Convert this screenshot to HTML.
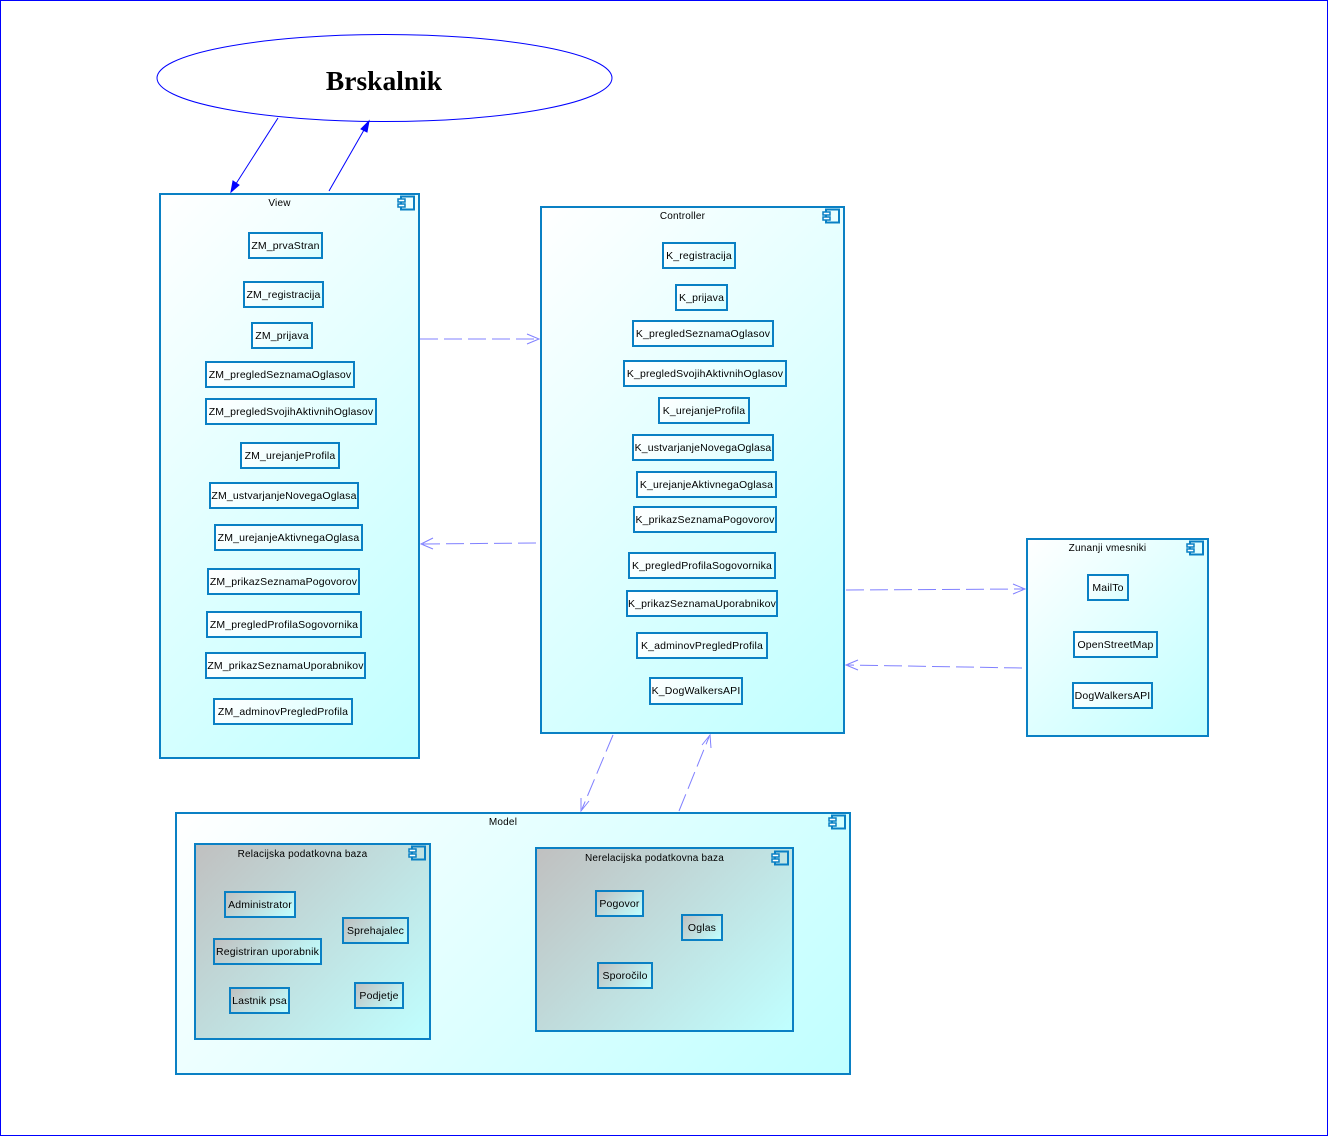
<!DOCTYPE html>
<html><head><meta charset="utf-8"><style>
html,body{margin:0;padding:0;background:#fff;}
#c{position:relative;width:1328px;height:1136px;overflow:hidden;font-family:"Liberation Sans",sans-serif;}
.b{position:absolute;box-sizing:border-box;border:2px solid #0a80c4;background:linear-gradient(135deg,#ffffff 0%,#c0ffff 100%);}
.g{background:linear-gradient(135deg,#c0c0c0 0%,#c0ffff 100%);}
.t{position:absolute;left:0;right:20px;text-align:center;font-size:10px;letter-spacing:0.2px;color:#000;}
.s{position:absolute;box-sizing:border-box;border:2px solid #0a80c4;font-size:10.5px;letter-spacing:0.15px;color:#000;display:flex;align-items:center;justify-content:center;white-space:nowrap;background:linear-gradient(135deg,#ffffff 0%,#d8ffff 100%);}
.sg{background:linear-gradient(135deg,#c0c0c0 0%,#c0ffff 100%);}
svg{position:absolute;left:0;top:0;}
</style></head><body><div id="c">
<div style="position:absolute;left:0;top:0;width:1328px;height:1136px;box-sizing:border-box;border:1px solid #0000ff;"></div>

<div class="b" style="left:159px;top:193px;width:261px;height:566px;"><div class="t" style="top:3px">View</div></div>
<div class="b" style="left:540px;top:206px;width:305px;height:528px;"><div class="t" style="top:3px">Controller</div></div>
<div class="b" style="left:1026px;top:538px;width:183px;height:199px;"><div class="t" style="top:3px">Zunanji vmesniki</div></div>
<div class="b" style="left:175px;top:812px;width:676px;height:263px;"><div class="t" style="top:3px">Model</div></div>
<div class="b g" style="left:194px;top:843px;width:237px;height:197px;"><div class="t" style="top:4px">Relacijska podatkovna baza</div></div>
<div class="b g" style="left:535px;top:847px;width:259px;height:185px;"><div class="t" style="top:4px">Nerelacijska podatkovna baza</div></div>

<div class="s" style="left:248px;top:232px;width:75px;height:27px">ZM_prvaStran</div>
<div class="s" style="left:243px;top:281px;width:81px;height:27px">ZM_registracija</div>
<div class="s" style="left:251px;top:322px;width:62px;height:27px">ZM_prijava</div>
<div class="s" style="left:205px;top:361px;width:150px;height:27px">ZM_pregledSeznamaOglasov</div>
<div class="s" style="left:205px;top:398px;width:172px;height:27px">ZM_pregledSvojihAktivnihOglasov</div>
<div class="s" style="left:240px;top:442px;width:100px;height:27px">ZM_urejanjeProfila</div>
<div class="s" style="left:209px;top:482px;width:150px;height:27px">ZM_ustvarjanjeNovegaOglasa</div>
<div class="s" style="left:214px;top:524px;width:149px;height:27px">ZM_urejanjeAktivnegaOglasa</div>
<div class="s" style="left:207px;top:568px;width:153px;height:27px">ZM_prikazSeznamaPogovorov</div>
<div class="s" style="left:206px;top:611px;width:156px;height:27px">ZM_pregledProfilaSogovornika</div>
<div class="s" style="left:205px;top:652px;width:161px;height:27px">ZM_prikazSeznamaUporabnikov</div>
<div class="s" style="left:213px;top:698px;width:140px;height:27px">ZM_adminovPregledProfila</div>

<div class="s" style="left:662px;top:242px;width:74px;height:27px">K_registracija</div>
<div class="s" style="left:675px;top:284px;width:53px;height:27px">K_prijava</div>
<div class="s" style="left:632px;top:320px;width:142px;height:27px">K_pregledSeznamaOglasov</div>
<div class="s" style="left:623px;top:360px;width:164px;height:27px">K_pregledSvojihAktivnihOglasov</div>
<div class="s" style="left:658px;top:397px;width:92px;height:27px">K_urejanjeProfila</div>
<div class="s" style="left:632px;top:434px;width:142px;height:27px">K_ustvarjanjeNovegaOglasa</div>
<div class="s" style="left:636px;top:471px;width:141px;height:27px">K_urejanjeAktivnegaOglasa</div>
<div class="s" style="left:633px;top:506px;width:144px;height:27px">K_prikazSeznamaPogovorov</div>
<div class="s" style="left:628px;top:552px;width:148px;height:27px">K_pregledProfilaSogovornika</div>
<div class="s" style="left:626px;top:590px;width:152px;height:27px">K_prikazSeznamaUporabnikov</div>
<div class="s" style="left:636px;top:632px;width:132px;height:27px">K_adminovPregledProfila</div>
<div class="s" style="left:649px;top:677px;width:94px;height:28px">K_DogWalkersAPI</div>

<div class="s" style="left:1087px;top:574px;width:42px;height:27px">MailTo</div>
<div class="s" style="left:1073px;top:631px;width:85px;height:27px">OpenStreetMap</div>
<div class="s" style="left:1072px;top:682px;width:81px;height:27px">DogWalkersAPI</div>

<div class="s sg" style="left:224px;top:891px;width:72px;height:27px">Administrator</div>
<div class="s sg" style="left:342px;top:917px;width:67px;height:27px">Sprehajalec</div>
<div class="s sg" style="left:213px;top:938px;width:109px;height:27px">Registriran uporabnik</div>
<div class="s sg" style="left:229px;top:987px;width:61px;height:27px">Lastnik psa</div>
<div class="s sg" style="left:354px;top:982px;width:50px;height:27px">Podjetje</div>

<div class="s sg" style="left:595px;top:890px;width:49px;height:27px">Pogovor</div>
<div class="s sg" style="left:681px;top:914px;width:42px;height:27px">Oglas</div>
<div class="s sg" style="left:597px;top:962px;width:56px;height:27px">Sporočilo</div>

<svg width="1328" height="1136" viewBox="0 0 1328 1136">
<defs>
<g id="ic"><rect x="4" y="0.5" width="13" height="13" fill="none" stroke="#0a80c4" stroke-width="2"/><rect x="1" y="3" width="7" height="3" fill="#fff" stroke="#0a80c4" stroke-width="1.5"/><rect x="1" y="8" width="7" height="3" fill="#fff" stroke="#0a80c4" stroke-width="1.5"/></g>
</defs>
<use href="#ic" x="397" y="196"/>
<use href="#ic" x="822" y="209"/>
<use href="#ic" x="1186" y="541"/>
<use href="#ic" x="828" y="815"/>
<use href="#ic" x="408" y="846"/>
<use href="#ic" x="771" y="851"/>

<ellipse cx="384.5" cy="78" rx="227.5" ry="43.5" fill="#fff" stroke="#0000ff" stroke-width="1"/>
<text x="384" y="90" text-anchor="middle" font-family="Liberation Serif,serif" font-weight="bold" font-size="27.5">Brskalnik</text>

<g stroke="#0000ff" stroke-width="1" fill="#0000ff">
<line x1="278" y1="118" x2="232" y2="190"/>
<polygon points="231,192 233,181 239,185"/>
<line x1="329" y1="191" x2="368" y2="123"/>
<polygon points="369,121 367,132 361,129"/>
</g>
<g stroke="#8080ff" stroke-width="1" fill="none" stroke-dasharray="18,6">
<line x1="420" y1="339" x2="537" y2="339"/>
<line x1="536" y1="543" x2="423" y2="544"/>
<line x1="846" y1="590" x2="1023" y2="589"/>
<line x1="1022" y1="668" x2="848" y2="665"/>
<line x1="613" y1="735" x2="582" y2="809"/>
<line x1="679" y1="811" x2="709" y2="737"/>
</g>
<g stroke="#8080ff" stroke-width="1" fill="none">
<polyline points="527,334 539,339 527,344"/>
<polyline points="433,538 421,544 433,549"/>
<polyline points="1013,584 1025,589 1013,594"/>
<polyline points="858,660 846,665 858,670"/>
<polyline points="581,798 581,811 589,801"/>
<polyline points="702,745 710,735 711,748"/>
</g>
</svg>
</div></body></html>
